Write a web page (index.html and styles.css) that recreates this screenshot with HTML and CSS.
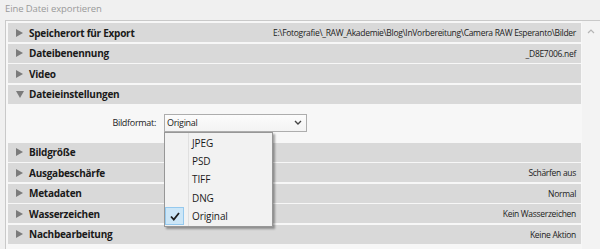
FILE: index.html
```html
<!DOCTYPE html>
<html lang="de">
  <head>
    <meta charset="UTF-8" />
    <title>Eine Datei exportieren</title>
    <link rel="stylesheet" href="styles.css">
  </head>
  <body>
    <div class="title">Eine Datei exportieren</div>
    <div class="frame">
      <div class="list">
        <div class="row">
          <span class="arrow"></span>
          <span class="name">Speicherort für Export</span>
          <span class="value">E:\Fotografie\_RAW_Akademie\Blog\InVorbereitung\Camera RAW Esperanto\Bilder</span>
        </div>
        <div class="row">
          <span class="arrow"></span>
          <span class="name">Dateibenennung</span>
          <span class="value">_D8E7006.nef</span>
        </div>
        <div class="row">
          <span class="arrow"></span>
          <span class="name">Video</span>
        </div>
        <div class="row">
          <span class="arrow open"></span>
          <span class="name">Dateieinstellungen</span>
        </div>
        <div class="section_body">
          <span class="label">Bildformat:</span>
          <div class="select">
            <span class="select_text">Original</span>
            <svg class="chevron" width="8" height="5" viewBox="0 0 8 5">
              <path d="M1 1 L4 4 L7 1" fill="none" stroke="#444" stroke-width="1.4" />
            </svg>
            <div class="menu">
              <div class="menu_item"><span class="tick"></span><span>JPEG</span></div>
              <div class="menu_item"><span class="tick"></span><span>PSD</span></div>
              <div class="menu_item"><span class="tick"></span><span>TIFF</span></div>
              <div class="menu_item"><span class="tick"></span><span>DNG</span></div>
              <div class="menu_item checked">
                <span class="tick">
                  <svg width="10" height="9" viewBox="0 0 10 9">
                    <path d="M1 4.5 L3.8 7.5 L9 1" fill="none" stroke="#1e1e1e" stroke-width="1.8" />
                  </svg>
                </span>
                <span>Original</span>
              </div>
            </div>
          </div>
        </div>
        <div class="row">
          <span class="arrow"></span>
          <span class="name">Bildgröße</span>
        </div>
        <div class="row">
          <span class="arrow"></span>
          <span class="name">Ausgabeschärfe</span>
          <span class="value">Schärfen aus</span>
        </div>
        <div class="row">
          <span class="arrow"></span>
          <span class="name">Metadaten</span>
          <span class="value">Normal</span>
        </div>
        <div class="row">
          <span class="arrow"></span>
          <span class="name">Wasserzeichen</span>
          <span class="value">Kein Wasserzeichen</span>
        </div>
        <div class="row">
          <span class="arrow"></span>
          <span class="name">Nachbearbeitung</span>
          <span class="value">Keine Aktion</span>
        </div>
      </div>
      <div class="scrollbar">
        <svg width="8" height="5" viewBox="0 0 8 5">
          <path d="M1 4 L4 1 L7 4" fill="none" stroke="#b5b5b5" stroke-width="1.2" />
        </svg>
      </div>
    </div>
  </body>
</html>
```

FILE: styles.css
```css
html,
body {
  margin: 0;
  padding: 0;
  width: 600px;
  height: 249px;
  overflow: hidden;
  background-color: #f0f0f0;
  font-family: "Open Sans", "Noto Sans", sans-serif;
  color: #1a1a1a;
}

.title {
  height: 20px;
  padding: 0 0 0 5px;
  font-size: 9.5px;
  letter-spacing: -0.1px;
  line-height: 18px;
  color: #9a9a9a;
}

.frame {
  display: flex;
  margin-left: 5px;
  border-top: 1px solid #c9c9c9;
  border-left: 1px solid #c9c9c9;
  background-color: #f7f7f7;
  height: 228px;
}

.list {
  flex: 1;
  display: flex;
  flex-direction: column;
  gap: 1.5px;
  padding: 2px 0 0 2px;
}

.row {
  height: 19px;
  flex-shrink: 0;
  display: flex;
  align-items: center;
  padding: 0 5px 0 8px;
  background-color: #d9d9d9;
}

.arrow {
  width: 0;
  height: 0;
  border-left: 7px solid #7b7b7b;
  border-top: 4px solid transparent;
  border-bottom: 4px solid transparent;
  margin-right: 6px;
}

.arrow.open {
  border-left: 4px solid transparent;
  border-right: 4px solid transparent;
  border-top: 7px solid #7b7b7b;
  border-bottom: 0;
  margin-right: 5px;
}

.name {
  font-size: 10px;
  font-weight: 700;
  letter-spacing: -0.25px;
}

.value {
  margin-left: auto;
  font-size: 8.5px;
  letter-spacing: -0.3px;
  color: #222;
}

.section_body {
  height: 36px;
  flex-shrink: 0;
  display: flex;
  align-items: center;
  padding-bottom: 1px;
  box-sizing: border-box;
}

.label {
  width: 148px;
  text-align: right;
  font-size: 9px;
  letter-spacing: -0.3px;
  margin-right: 8px;
  color: #222;
}

.select {
  position: relative;
  width: 139px;
  height: 16px;
  display: flex;
  align-items: center;
  border: 1px solid #adadad;
  background: linear-gradient(#fcfcfc, #f3f3f3);
  padding: 0 0 0 2px;
  box-sizing: content-box;
}

.select_text {
  font-size: 9px;
  letter-spacing: -0.3px;
  color: #1a1a1a;
}

.chevron {
  margin-left: auto;
  margin-right: 4px;
}

.menu {
  position: absolute;
  top: 17px;
  left: -1px;
  width: 107px;
  padding: 1px 0 1px 0;
  background-color: #f2f2f2;
  border: 1px solid #979797;
  box-shadow: 2px 2px 2px rgba(0, 0, 0, 0.35);
  background-image: linear-gradient(#e0e0e0, #e0e0e0);
  background-size: 1px 100%;
  background-position: 23px 0;
  background-repeat: no-repeat;
  z-index: 5;
}

.menu_item {
  height: 18.4px;
  display: flex;
  align-items: center;
  font-size: 10px;
  letter-spacing: -0.1px;
  color: #1a1a1a;
}

.tick {
  width: 19px;
  height: 18px;
  margin: 0 8px 0 0;
  box-sizing: border-box;
  display: flex;
  align-items: center;
  justify-content: center;
}

.checked .tick {
  background-color: #cce6f7;
  border: 1px solid #95c9ee;
}

.scrollbar {
  width: 18px;
  margin-left: 1px;
  background-color: #f3f3f3;
  display: flex;
  justify-content: center;
  padding-top: 8px;
  box-sizing: border-box;
}
```
